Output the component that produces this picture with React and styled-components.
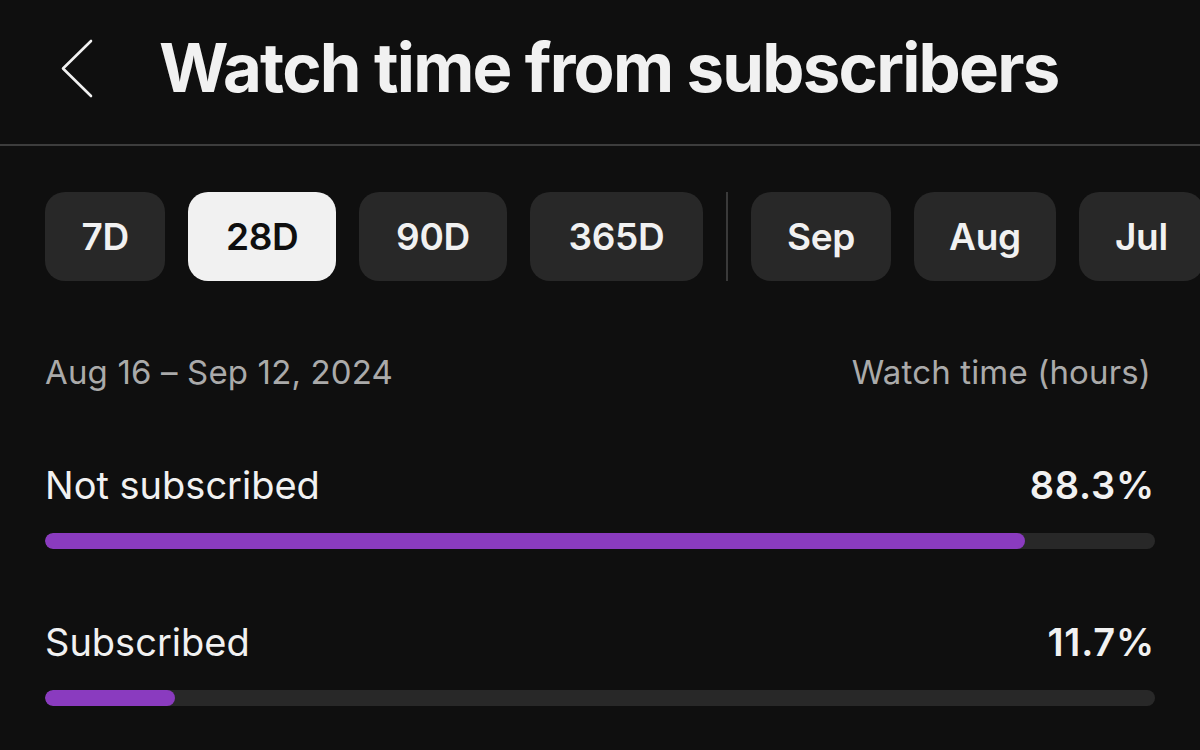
import React from "react";
import styled, { createGlobalStyle } from "styled-components";

const Global = createGlobalStyle`
  html, body { margin: 0; padding: 0; background: #0f0f0f; }
  body { font-family: Inter, "Noto Sans", sans-serif; color: #f1f1f1; }
  * { box-sizing: border-box; }
`;

const Page = styled.div`
  width: 1200px;
  height: 750px;
  overflow: hidden;
  background: #0f0f0f;
`;

const Header = styled.header`
  height: 146px;
  display: flex;
  align-items: center;
  padding: 0 0 8px 60px;
  border-bottom: 2px solid #3d3d3d;
`;

const BackButton = styled.button`
  width: 36px;
  height: 60px;
  background: none;
  border: none;
  padding: 0;
  margin-right: 63px;
  display: flex;
  align-items: center;
  justify-content: center;
  color: #f1f1f1;
`;

const Title = styled.h1`
  margin: 0;
  font-size: 67px;
  line-height: 80px;
  font-weight: 700;
  letter-spacing: -1.75px;
  color: #f1f1f1;
`;

const Content = styled.main`
  padding: 0 45px;
`;

const ChipRow = styled.div`
  display: flex;
  align-items: stretch;
  gap: 23px;
  margin-top: 46px;
  margin-right: -45px;
  height: 89px;
  overflow: hidden;
`;

const Chip = styled.button`
  flex-shrink: 0;
  height: 89px;
  padding: 0 ${(p) => p.$pad}px;
  border: none;
  border-radius: 20px;
  background: ${(p) => (p.$active ? "#f1f1f1" : "#282828")};
  color: ${(p) => (p.$active ? "#0f0f0f" : "#f1f1f1")};
  font-family: Inter, "Noto Sans", sans-serif;
  font-size: 37px;
  font-weight: 600;
  letter-spacing: -0.3px;
`;

const Separator = styled.div`
  flex-shrink: 0;
  width: 2px;
  background: #3a3a3a;
`;

const MetaRow = styled.div`
  display: flex;
  justify-content: space-between;
  margin-top: 71px;
  font-size: 33px;
  line-height: 40px;
  letter-spacing: 0.15px;
  color: #aaaaaa;
  font-weight: 400;
`;

const MetaRight = styled.span`
  margin-right: 4px;
`;

const Metric = styled.section`
  margin-top: 70px;
`;

const MetricHead = styled.div`
  display: flex;
  justify-content: space-between;
  font-size: 38px;
  line-height: 46px;
`;

const MetricLabel = styled.span`
  font-weight: 400;
  color: #f1f1f1;
`;

const MetricValue = styled.span`
  font-weight: 600;
  letter-spacing: 0.8px;
  color: #f1f1f1;
`;

const Track = styled.div`
  margin-top: 25px;
  height: 16px;
  border-radius: 8px;
  background: #282828;
  overflow: hidden;
`;

const Fill = styled.div`
  height: 100%;
  border-radius: 8px;
  background: #8a3bbf;
`;

const chips = [
  { label: "7D", pad: 36.5 },
  { label: "28D", pad: 37.5, active: true },
  { label: "90D", pad: 37 },
  { label: "365D", pad: 38.5 },
];
const months = [
  { label: "Sep", pad: 36 },
  { label: "Aug", pad: 35 },
  { label: "Jul", pad: 36 },
];

const metrics = [
  { label: "Not subscribed", value: 88.3 },
  { label: "Subscribed", value: 11.7 },
];

export default function App() {
  return (
    <Page>
      <Global />
      <Header>
        <BackButton aria-label="Back">
          <svg width="36" height="60" viewBox="0 0 36 60" fill="none">
            <path
              d="M31 3 L3 30.5 L31 58"
              stroke="#f1f1f1"
              strokeWidth="2.6"
              strokeLinecap="round"
              strokeLinejoin="round"
            />
          </svg>
        </BackButton>
        <Title>Watch time from subscribers</Title>
      </Header>
      <Content>
        <ChipRow>
          {chips.map((c) => (
            <Chip key={c.label} $pad={c.pad} $active={c.active}>
              {c.label}
            </Chip>
          ))}
          <Separator />
          {months.map((c) => (
            <Chip key={c.label} $pad={c.pad}>
              {c.label}
            </Chip>
          ))}
        </ChipRow>
        <MetaRow>
          <span>Aug 16 – Sep 12, 2024</span>
          <MetaRight>Watch time (hours)</MetaRight>
        </MetaRow>
        {metrics.map((m) => (
          <Metric key={m.label}>
            <MetricHead>
              <MetricLabel>{m.label}</MetricLabel>
              <MetricValue>{m.value}%</MetricValue>
            </MetricHead>
            <Track>
              <Fill style={{ width: `${m.value}%` }} />
            </Track>
          </Metric>
        ))}
      </Content>
    </Page>
  );
}
